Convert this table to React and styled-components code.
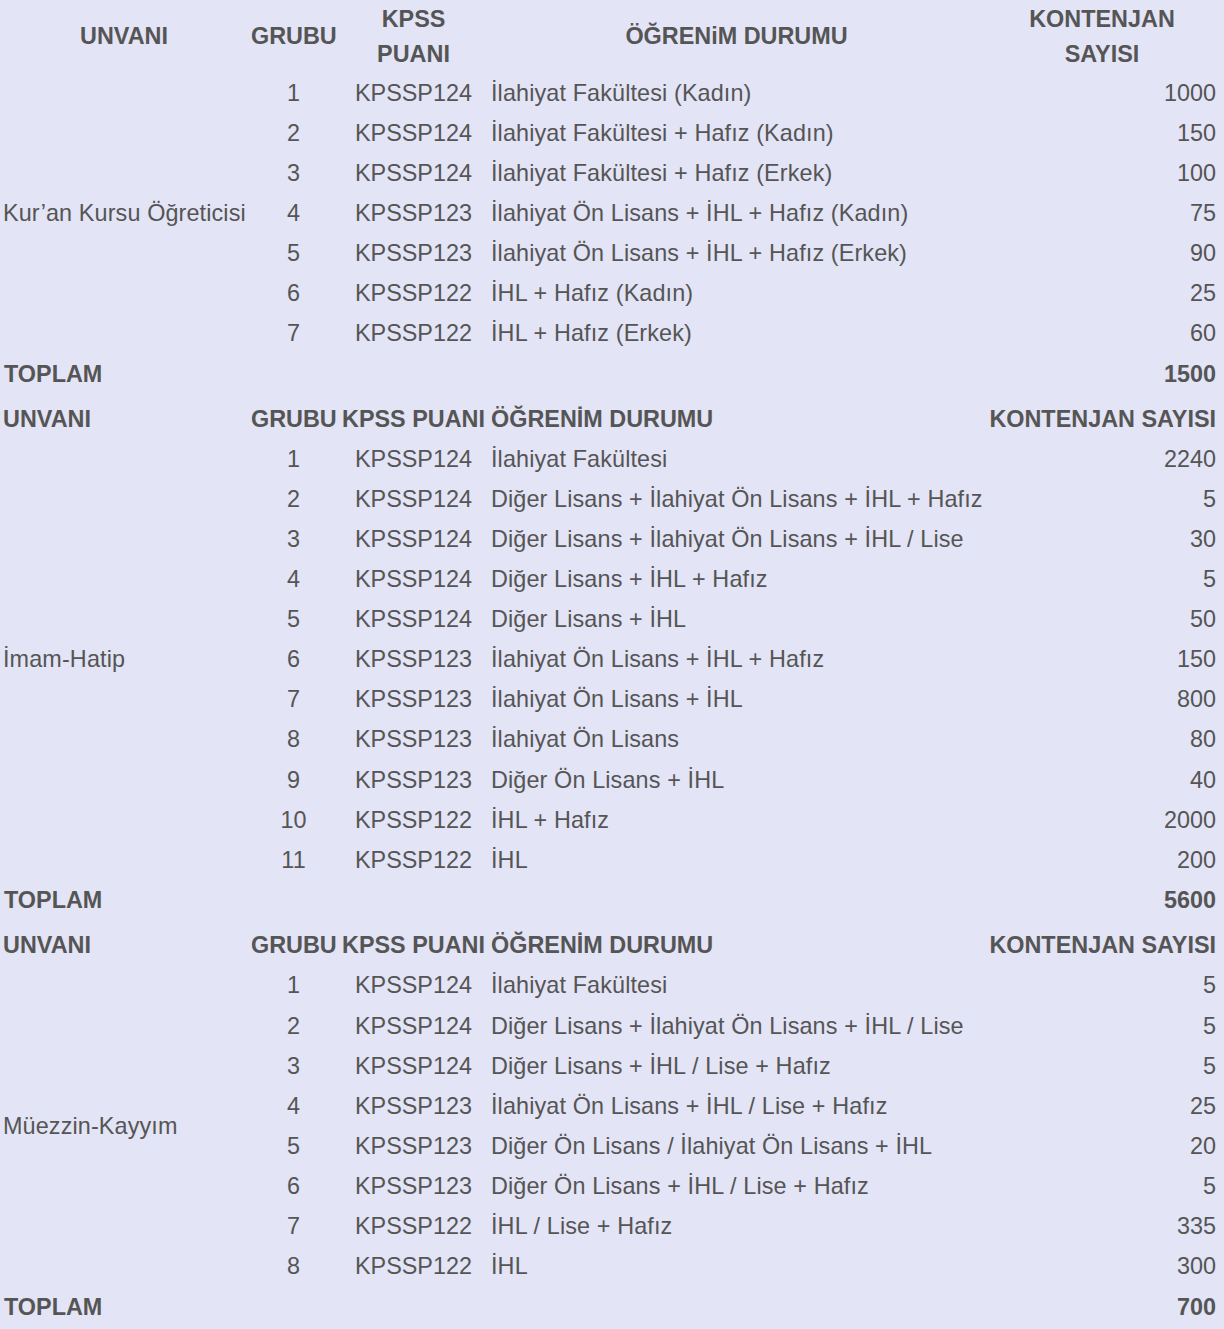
import styled, { createGlobalStyle } from "styled-components";

const GlobalStyle = createGlobalStyle`
  html, body {
    margin: 0;
    padding: 0;
    background: #e3e4f5;
  }
  body {
    font-family: "Liberation Sans", Arial, sans-serif;
    color: #555555;
  }
`;

const sections = [
  {
    title: "Kur’an Kursu Öğreticisi",
    total: "1500",
    rows: [
      ["1", "KPSSP124", "İlahiyat Fakültesi (Kadın)", "1000"],
      ["2", "KPSSP124", "İlahiyat Fakültesi + Hafız (Kadın)", "150"],
      ["3", "KPSSP124", "İlahiyat Fakültesi + Hafız (Erkek)", "100"],
      ["4", "KPSSP123", "İlahiyat Ön Lisans + İHL + Hafız (Kadın)", "75"],
      ["5", "KPSSP123", "İlahiyat Ön Lisans + İHL + Hafız (Erkek)", "90"],
      ["6", "KPSSP122", "İHL + Hafız (Kadın)", "25"],
      ["7", "KPSSP122", "İHL + Hafız (Erkek)", "60"],
    ],
  },
  {
    title: "İmam-Hatip",
    total: "5600",
    rows: [
      ["1", "KPSSP124", "İlahiyat Fakültesi", "2240"],
      ["2", "KPSSP124", "Diğer Lisans + İlahiyat Ön Lisans + İHL + Hafız", "5"],
      ["3", "KPSSP124", "Diğer Lisans + İlahiyat Ön Lisans + İHL / Lise", "30"],
      ["4", "KPSSP124", "Diğer Lisans + İHL + Hafız", "5"],
      ["5", "KPSSP124", "Diğer Lisans + İHL", "50"],
      ["6", "KPSSP123", "İlahiyat Ön Lisans + İHL + Hafız", "150"],
      ["7", "KPSSP123", "İlahiyat Ön Lisans + İHL", "800"],
      ["8", "KPSSP123", "İlahiyat Ön Lisans", "80"],
      ["9", "KPSSP123", "Diğer Ön Lisans + İHL", "40"],
      ["10", "KPSSP122", "İHL + Hafız", "2000"],
      ["11", "KPSSP122", "İHL", "200"],
    ],
  },
  {
    title: "Müezzin-Kayyım",
    total: "700",
    rows: [
      ["1", "KPSSP124", "İlahiyat Fakültesi", "5"],
      ["2", "KPSSP124", "Diğer Lisans + İlahiyat Ön Lisans + İHL / Lise", "5"],
      ["3", "KPSSP124", "Diğer Lisans + İHL / Lise + Hafız", "5"],
      ["4", "KPSSP123", "İlahiyat Ön Lisans + İHL / Lise + Hafız", "25"],
      ["5", "KPSSP123", "Diğer Ön Lisans / İlahiyat Ön Lisans + İHL", "20"],
      ["6", "KPSSP123", "Diğer Ön Lisans + İHL / Lise + Hafız", "5"],
      ["7", "KPSSP122", "İHL / Lise + Hafız", "335"],
      ["8", "KPSSP122", "İHL", "300"],
    ],
  },
];

const App = () => {
  return (
    <>
      <GlobalStyle />
      <Table>
        <colgroup>
          <col style={{ width: 248 }} />
          <col style={{ width: 91 }} />
          <col style={{ width: 149 }} />
          <col style={{ width: 497 }} />
          <col style={{ width: 239 }} />
        </colgroup>
        <thead>
          <tr>
            <HeadCell>UNVANI</HeadCell>
            <HeadCell>GRUBU</HeadCell>
            <HeadCell>
              KPSS
              <br />
              PUANI
            </HeadCell>
            <HeadCell>ÖĞRENiM DURUMU</HeadCell>
            <HeadCell>
              KONTENJAN
              <br />
              SAYISI
            </HeadCell>
          </tr>
        </thead>
        {sections.map((section, i) => (
          <tbody key={section.title}>
            {i > 0 && (
              <tr>
                <LabelCell>UNVANI</LabelCell>
                <LabelCell>GRUBU</LabelCell>
                <LabelCell>KPSS PUANI</LabelCell>
                <LabelCell>ÖĞRENİM DURUMU</LabelCell>
                <LabelCell $align="right">KONTENJAN SAYISI</LabelCell>
              </tr>
            )}
            {section.rows.map((row, j) => (
              <tr key={row[0]}>
                {j === 0 && (
                  <Cell rowSpan={section.rows.length} $text>
                    {section.title}
                  </Cell>
                )}
                <Cell $align="center">{row[0]}</Cell>
                <Cell $align="center">{row[1]}</Cell>
                <Cell $text>{row[2]}</Cell>
                <Cell $align="right">{row[3]}</Cell>
              </tr>
            ))}
            <tr>
              <TotalCell>TOPLAM</TotalCell>
              <TotalCell />
              <TotalCell />
              <TotalCell />
              <TotalCell $align="right">{section.total}</TotalCell>
            </tr>
          </tbody>
        ))}
      </Table>
    </>
  );
};

const Table = styled.table`
  width: 1224px;
  table-layout: fixed;
  border-collapse: collapse;
  font-size: 23.4px;
  line-height: 35px;
  td:last-child,
  th:last-child {
    padding-right: 8px;
  }
`;

const HeadCell = styled.th`
  padding: 1.5px 3px;
  font-weight: bold;
  text-align: center;
  vertical-align: middle;
`;

const Cell = styled.td`
  padding: 2.55px 3px;
  text-align: ${(p) => p.$align || "left"};
  letter-spacing: ${(p) => (p.$text ? "0.12px" : "normal")};
  vertical-align: middle;
  white-space: nowrap;
`;

const LabelCell = styled.td`
  padding: 7.5px 3px 2.6px;
  font-weight: bold;
  text-align: ${(p) => p.$align || "left"};
  vertical-align: middle;
  white-space: nowrap;
`;

const TotalCell = styled.td`
  padding: 3px 3px 2.5px 4px;
  font-weight: bold;
  text-align: ${(p) => p.$align || "left"};
  vertical-align: middle;
`;

export default App;
